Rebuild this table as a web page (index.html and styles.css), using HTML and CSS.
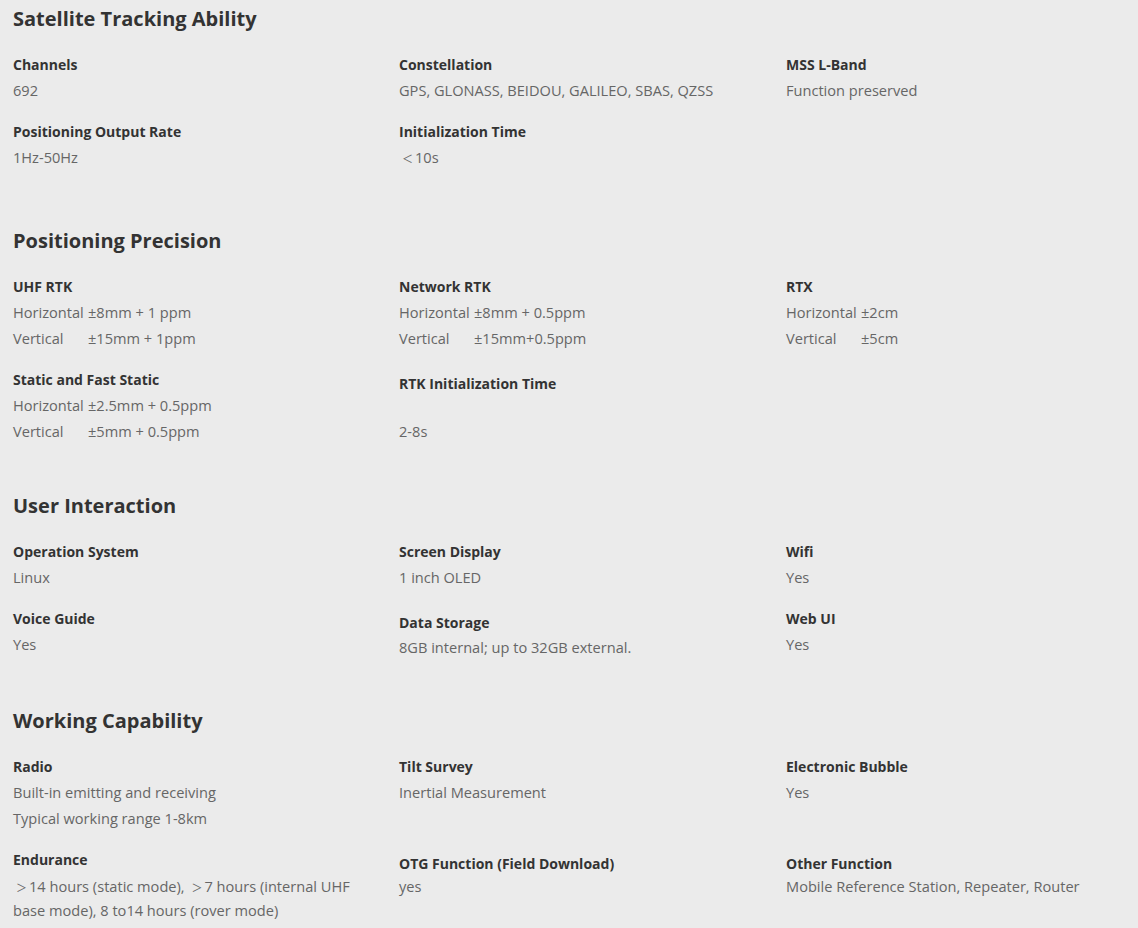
FILE: index.html
```html
<!DOCTYPE html>
<html lang="en">
<head>
<meta charset="utf-8">
<title>Specifications</title>
<link rel="stylesheet" href="styles.css">
</head>
<body>
<main class="specs">
  <section class="sec sec-1">
    <h2 class="sec-title">Satellite Tracking Ability</h2>
    <div class="grid">
      <div class="item"><div class="lab">Channels</div><div class="val">692</div></div>
      <div class="item"><div class="lab">Constellation</div><div class="val">GPS, GLONASS, BEIDOU, GALILEO, SBAS, QZSS</div></div>
      <div class="item"><div class="lab">MSS L-Band</div><div class="val">Function preserved</div></div>
      <div class="item"><div class="lab">Positioning Output Rate</div><div class="val">1Hz-50Hz</div></div>
      <div class="item"><div class="lab">Initialization Time</div><div class="val"><span class="fw">＜</span>10s</div></div>
    </div>
  </section>

  <section class="sec sec-2">
    <h2 class="sec-title">Positioning Precision</h2>
    <div class="grid">
      <div class="item"><div class="lab">UHF RTK</div>
        <div class="val"><span class="k">Horizontal</span>±8mm + 1 ppm</div>
        <div class="val"><span class="k">Vertical</span>±15mm + 1ppm</div></div>
      <div class="item"><div class="lab">Network RTK</div>
        <div class="val"><span class="k">Horizontal</span>±8mm + 0.5ppm</div>
        <div class="val"><span class="k">Vertical</span>±15mm+0.5ppm</div></div>
      <div class="item"><div class="lab">RTX</div>
        <div class="val"><span class="k">Horizontal</span>±2cm</div>
        <div class="val"><span class="k">Vertical</span>±5cm</div></div>
      <div class="item"><div class="lab">Static and Fast Static</div>
        <div class="val"><span class="k">Horizontal</span>±2.5mm + 0.5ppm</div>
        <div class="val"><span class="k">Vertical</span>±5mm + 0.5ppm</div></div>
      <div class="item"><div class="lab shift">RTK Initialization Time</div>
        <div class="val">&nbsp;</div>
        <div class="val">2-8s</div></div>
    </div>
  </section>

  <section class="sec sec-3">
    <h2 class="sec-title">User Interaction</h2>
    <div class="grid">
      <div class="item"><div class="lab">Operation System</div><div class="val">Linux</div></div>
      <div class="item"><div class="lab">Screen Display</div><div class="val">1 inch OLED</div></div>
      <div class="item"><div class="lab">Wifi</div><div class="val">Yes</div></div>
      <div class="item"><div class="lab">Voice Guide</div><div class="val">Yes</div></div>
      <div class="item"><div class="lab shift-all">Data Storage</div><div class="val">8GB internal; up to 32GB external.</div></div>
      <div class="item"><div class="lab">Web UI</div><div class="val">Yes</div></div>
    </div>
  </section>

  <section class="sec sec-4">
    <h2 class="sec-title">Working Capability</h2>
    <div class="grid">
      <div class="item"><div class="lab">Radio</div>
        <div class="val">Built-in emitting and receiving</div>
        <div class="val">Typical working range 1-8km</div></div>
      <div class="item"><div class="lab">Tilt Survey</div><div class="val">Inertial Measurement</div></div>
      <div class="item"><div class="lab">Electronic Bubble</div><div class="val">Yes</div></div>
      <div class="item tight"><div class="lab">Endurance</div>
        <div class="val"><span class="fw">＞</span>14 hours (static mode), <span class="fw">＞</span>7 hours (internal UHF base mode), 8 to14 hours (rover mode)</div></div>
      <div class="item tight"><div class="lab shift">OTG Function (Field Download)</div><div class="val">yes</div></div>
      <div class="item tight"><div class="lab shift">Other Function</div><div class="val">Mobile Reference Station, Repeater, Router</div></div>
    </div>
  </section>
</main>
</body>
</html>
```

FILE: styles.css
```css
html, body {
  margin: 0;
  padding: 0;
  background: #ebebeb;
}

body {
  font-family: "Open Sans", "Noto Sans", "Noto Sans CJK SC", sans-serif;
  color: #333;
  overflow: hidden;
}

.specs {
  padding: 4px 0 0 13px;
}

.sec-title {
  margin: 0;
  font-size: 20px;
  line-height: 30px;
  font-weight: 700;
  color: #333;
}

.sec-1 { padding-bottom: 56px; }
.sec-2 { padding-bottom: 47px; }
.sec-3 { padding-bottom: 46px; }

.grid {
  display: grid;
  grid-template-columns: 386px 387px 1fr;
  row-gap: 18px;
  margin-top: 20px;
}

.item {
  width: 340px;
}

.lab {
  font-size: 14px;
  font-weight: 700;
  line-height: 22px;
  color: #333;
}

.lab.shift {
  padding-top: 4px;
  margin-bottom: -4px;
}

.lab.shift-all {
  padding-top: 4px;
  margin-bottom: -1px;
}

.val {
  font-size: 14.6px;
  line-height: 26px;
  color: #666;
}

.lab + .val {
  margin-top: 1px;
}

.fw {
  font-size: 11px;
  line-height: 1;
  padding: 0 2px 0 3px;
}

.k {
  display: inline-block;
  width: 75px;
}

.tight .val {
  line-height: 24px;
}

.tight .lab + .val {
  margin-top: 3px;
}
```
